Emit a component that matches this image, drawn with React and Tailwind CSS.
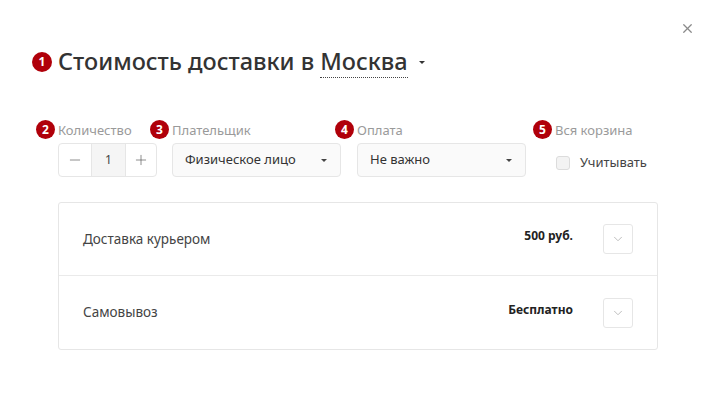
import { ChevronDown, X, Minus, Plus } from 'lucide-react';

function Badge({ n, className = '' }) {
  return (
    <span
      className={`absolute flex items-center justify-center rounded-full bg-[#b0000a] text-white font-bold ${className}`}
    >
      {n}
    </span>
  );
}

function Caret({ dark }) {
  return (
    <svg width="6" height="3" viewBox="0 0 6 3" className="shrink-0">
      <path d="M0 0h6L3 3z" fill={dark ? '#333' : '#444'} />
    </svg>
  );
}

function Select({ value, width }) {
  return (
    <div
      className={`${width} h-[34px] flex items-center justify-between pl-[12px] pr-[13px] rounded-[4px] border border-[#e6e6e6] bg-[#fafafa] text-[13px] text-[#333]`}
    >
      <span>{value}</span>
      <Caret />
    </div>
  );
}

function Field({ n, label, children, className = '' }) {
  return (
    <div className={`relative ${className}`}>
      <Badge n={n} className="w-[19px] h-[19px] -left-[22px] top-[1px] text-[12px]" />
      <div className="h-[22px] leading-[22px] text-[13px] text-[#9a9a9a]">{label}</div>
      <div className="mt-[2px]">{children}</div>
    </div>
  );
}

function DeliveryRow({ name, price, last }) {
  return (
    <div
      className={`h-[73px] flex items-center pl-[24px] pr-[24px] ${last ? '' : 'border-b border-[#eaeaea]'}`}
    >
      <span className="flex-1 text-[13.5px] text-[#444]">{name}</span>
      <span className="text-[12px] font-bold text-[#222] -mt-[6px]">{price}</span>
      <div className="ml-[30px] w-[30px] h-[30px] flex items-center justify-center rounded-[3px] border border-[#e6e6e6]">
        <ChevronDown size={14} strokeWidth={1.5} color="#b5b5b5" />
      </div>
    </div>
  );
}

export default function App() {
  return (
    <div
      className="relative w-[716px] h-[407px] bg-white overflow-hidden"
      style={{ fontFamily: '"Noto Sans", "Open Sans", sans-serif' }}
    >
      <button className="absolute right-[21px] top-[21px] text-[#8a8a8a]">
        <X size={15} strokeWidth={2} />
      </button>

      <div className="pl-[58px] pt-[46px]">
        <div className="relative flex items-center h-[32px]">
          <Badge n="1" className="w-[20px] h-[20px] -left-[26px] top-[6px] text-[12px]" />
          <h1 className="text-[23.5px] font-medium text-[#333]">
            Стоимость доставки в{' '}
            <span className="border-b border-dotted border-[#444]">Москва</span>
          </h1>
          <span className="ml-[11px]">
            <Caret dark />
          </span>
        </div>

        <div className="flex mt-[41px]">
          <Field n="2" label="Количество" className="w-[99px]">
            <div className="flex h-[34px] w-[99px] rounded-[4px] border border-[#e6e6e6] text-[#555]">
              <div className="w-[32px] flex items-center justify-center">
                <Minus size={16} strokeWidth={1} />
              </div>
              <div className="w-[35px] flex items-center justify-center bg-[#f5f5f5] border-l border-r border-[#e6e6e6] text-[12px] text-[#444]">
                1
              </div>
              <div className="flex-1 flex items-center justify-center">
                <Plus size={16} strokeWidth={1} />
              </div>
            </div>
          </Field>
          <Field n="3" label="Плательщик" className="ml-[15px]">
            <Select value="Физическое лицо" width="w-[169px]" />
          </Field>
          <Field n="4" label="Оплата" className="ml-[16px]">
            <Select value="Не важно" width="w-[169px]" />
          </Field>
          <Field n="5" label="Вся корзина" className="ml-[29px]">
            <label className="flex items-center h-[34px] pl-[1px] pt-[6px]">
              <span className="w-[14px] h-[14px] rounded-[3px] border border-[#dcdcdc] bg-[#f3f3f3]" />
              <span className="ml-[10px] text-[13px] text-[#444]">Учитывать</span>
            </label>
          </Field>
        </div>

        <div className="mt-[25px] w-[600px] rounded-[3px] border border-[#e6e6e6]">
          <DeliveryRow name="Доставка курьером" price="500 руб." />
          <DeliveryRow name="Самовывоз" price="Бесплатно" last />
        </div>
      </div>
    </div>
  );
}
